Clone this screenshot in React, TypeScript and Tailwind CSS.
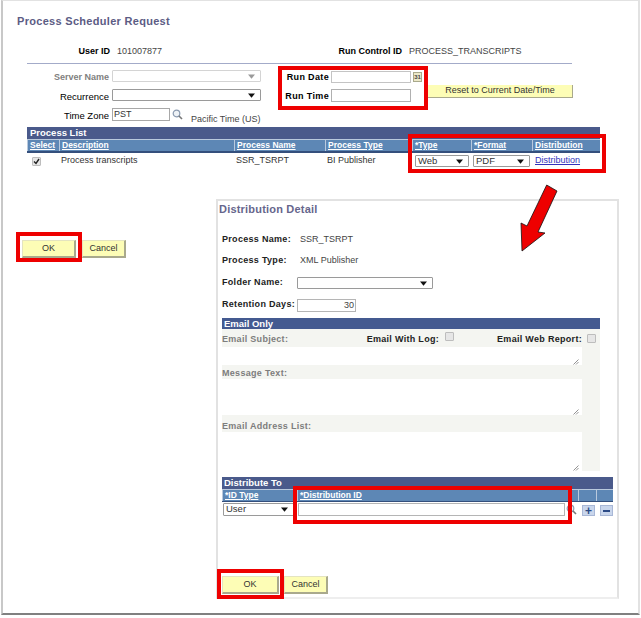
import React from "react";

const Caret = ({ faint }: { faint?: boolean }) => (
  <svg width="7" height="5" viewBox="0 0 7 5" className="shrink-0">
    <path d="M0 0.5h7L3.5 4.8z" fill={faint ? "#9a9a9a" : "#111"} />
  </svg>
);

const Select = ({ w, value, faint, h = "h-[12px]" }: { w: string; value?: string; faint?: boolean; h?: string }) => (
  <div className={`${w} ${h} flex items-center justify-between border rounded-[1px] pl-[2px] pr-[5px] text-[9.5px] bg-white ${faint ? "border-[#d4d4d4]" : "border-[#9a9a9a]"}`}>
    <span>{value}</span>
    <Caret faint={faint} />
  </div>
);

const Lookup = ({ size = 11 }: { size?: number }) => (
  <svg width={size} height={size} viewBox="0 0 11 11" fill="none" className="shrink-0">
    <circle cx="4.5" cy="4.5" r="3.3" stroke="#8a9ab0" strokeWidth="1.2" fill="#eef2f6" />
    <path d="M7 7l3 3" stroke="#777" strokeWidth="1.6" />
  </svg>
);

const Btn = ({ children, w }: { children: React.ReactNode; w: string }) => (
  <div className={`${w} h-[18px] flex items-center justify-center bg-[#fdfdb6] border-t border-l border-[#e4e4c0] border-r-2 border-b-2 border-r-[#a9a98c] border-b-[#a9a98c] text-[9px] text-[#333]`}>
    {children}
  </div>
);

const Red = ({ className }: { className: string }) => (
  <div className={`absolute border-[4px] border-[#ee0000] ${className}`} />
);

const Resize = () => (
  <svg width="6" height="6" viewBox="0 0 6 6" className="mr-[3px]">
    <path d="M0.5 5.5L5.5 0.5M3 5.5L5.5 3" stroke="#777" strokeWidth="0.8" />
  </svg>
);

const Box = ({ children }: { children?: React.ReactNode }) => (
  <div className="w-[9px] h-[9px] border border-[#bdbdbd] bg-[#e6e6e6] rounded-[1px] flex items-center justify-center">{children}</div>
);

const Th = ({ w, children }: { w: string; children?: React.ReactNode }) => (
  <div className={`${w} h-full border-l border-t border-[#b9c9dd] pl-[2px] flex items-center font-bold underline text-white text-[8.5px] overflow-hidden whitespace-nowrap`}>
    {children}
  </div>
);

export default function App() {
  return (
    <div className="relative w-[641px] h-[618px] bg-white text-[9px] text-[#333]" style={{ fontFamily: '"Liberation Sans", Arial, sans-serif' }}>
      <div className="relative ml-[1px] w-[639px] h-[615px] bg-white border-l-2 border-l-[#c8c8c8] border-t border-t-[#e2e2e2] border-r-2 border-r-[#e2e2e2] border-b-2 border-b-[#808080] pl-[14px] pt-[13px]">
        <div className="h-[14px] leading-[14px] font-bold text-[11px] tracking-[0.3px] text-[#5c5c84]">Process Scheduler Request</div>

        <div className="mt-[17px] ml-[10px] w-[545px] h-[19px] border-b border-[#a3abc9] flex items-start leading-[12px]">
          <div className="w-[83px] text-right font-bold text-black">User ID</div>
          <div className="ml-[7px] w-[219px] text-[#444]">101007877</div>
          <div className="w-[66px] text-right font-bold text-black whitespace-nowrap">Run Control ID</div>
          <div className="ml-[7px] text-[#444]">PROCESS_TRANSCRIPTS</div>
        </div>

        <div className="ml-[10px] flex h-[63px]">
          <div className="w-[234px] pt-[6px] flex flex-col gap-[7px]">
            <div className="flex items-start h-[12px]">
              <div className="w-[83px] pt-[1px] text-right font-bold text-[#808080] pr-[1px]">Server Name</div>
              <div className="ml-[2px]"><Select w="w-[149px]" faint /></div>
            </div>
            <div className="flex items-start h-[12px]">
              <div className="w-[83px] pt-[1px] text-right text-black pr-[1px] text-[9.5px]">Recurrence</div>
              <div className="ml-[2px]"><Select w="w-[149px]" /></div>
            </div>
            <div className="flex items-start h-[12px]">
              <div className="w-[83px] pt-[1px] text-right text-black pr-[1px] text-[9.5px]">Time Zone</div>
              <div className="ml-[2px] w-[58px] h-[13px] border border-[#a8a8a8] pl-[1px] leading-[11px] text-[#333]">PST</div>
              <div className="ml-[2px] mt-[1px]"><Lookup /></div>
              <div className="ml-[8px] mt-[5px] whitespace-nowrap text-[#444]">Pacific Time (US)</div>
            </div>
          </div>
          <div className="ml-[16px] w-[53px] pt-[7px] flex flex-col gap-[7px] items-end font-bold tracking-[0.35px] text-black">
            <div className="h-[12px] leading-[12px] pr-[1px]">Run Date</div>
            <div className="h-[12px] leading-[12px] pr-[1px]">Run Time</div>
          </div>
          <div className="ml-[1px] pt-[7px] flex flex-col gap-[6px]">
            <div className="flex items-center gap-[2px] h-[12px]">
              <div className="w-[80px] h-[12px] border border-[#c4c4c4]" />
              <div className="w-[9px] h-[10px] border border-[#a9a98c] bg-[#ece8c8] flex items-center justify-center text-[6px] font-bold leading-none text-[#444]">31</div>
            </div>
            <div className="w-[80px] h-[13px] border border-[#b0b0b0]" />
          </div>
          <div className="ml-[6px] mt-[21px] w-[145px] h-[13px]">
            <div className="h-[13px] leading-[11px] text-center bg-[#fdfdb6] border-r border-b border-[#a9a98c] text-[#333] whitespace-nowrap">Reset to Current Date/Time</div>
          </div>
        </div>

        <div className="ml-[10px] w-[573px]">
          <div className="h-[12px] leading-[12px] bg-[#4a5a8b] pl-[3px] font-bold text-[9.5px] text-white">Process List</div>
          <div className="h-[14px] bg-[#5d87b5] border-b-2 border-[#344f7c] flex">
            <Th w="w-[32px]">Select</Th>
            <Th w="w-[175px]">Description</Th>
            <Th w="w-[91px]">Process Name</Th>
            <Th w="w-[87px]">Process Type</Th>
            <Th w="w-[59px]">*Type</Th>
            <Th w="w-[61px]">*Format</Th>
            <Th w="w-[68px]">Distribution</Th>
          </div>
          <div className="flex items-center h-[16px] text-[#333]">
            <div className="w-[32px] pl-[5px]">
              <Box>
                <svg width="7" height="7" viewBox="0 0 7 7"><path d="M1 3.5l2 2L6 1" stroke="#222" strokeWidth="1.4" fill="none" /></svg>
              </Box>
            </div>
            <div className="w-[175px] pl-[2px]">Process transcripts</div>
            <div className="w-[91px] pl-[2px]">SSR_TSRPT</div>
            <div className="w-[87px] pl-[2px]">BI Publisher</div>
            <div className="w-[59px] pl-[3px]"><Select w="w-[54px]" value="Web" /></div>
            <div className="w-[61px] pl-[2px]"><Select w="w-[57px]" value="PDF" /></div>
            <div className="w-[68px] pl-[3px] underline text-[#3333bb]">Distribution</div>
          </div>
        </div>

        <div className="mt-[30px] flex -ml-[1px]">
          <div className="w-[200px] pl-[6px] pt-[41px] flex items-start gap-[6px]">
            <Btn w="w-[54px]">OK</Btn>
            <Btn w="w-[44px]">Cancel</Btn>
          </div>
          <div className="w-[403px] h-[400px] border-2 border-[#e2e2e2] border-b-[#eeeeee] pl-[4px] pt-[1px]">
            <div className="-ml-[3px] h-[14px] leading-[14px] font-bold text-[11px] tracking-[0.2px] text-[#66668c]">Distribution Detail</div>
            <div className="tracking-[0.3px]">
              <div className="mt-[17px] flex h-[14px] items-center">
                <div className="w-[78px] font-bold text-[#222]">Process Name:</div>
                <div className="text-[#444] tracking-normal">SSR_TSRPT</div>
              </div>
              <div className="mt-[7px] flex h-[14px] items-center">
                <div className="w-[78px] font-bold text-[#222]">Process Type:</div>
                <div className="text-[#444] tracking-normal">XML Publisher</div>
              </div>
              <div className="mt-[8px] flex h-[14px] items-center">
                <div className="w-[75px] font-bold text-[#222]">Folder Name:</div>
                <Select w="w-[136px]" />
              </div>
              <div className="mt-[8px] flex h-[14px] items-center">
                <div className="w-[75px] font-bold text-[#222]">Retention Days:</div>
                <div className="w-[59px] h-[13px] border border-[#b5b5b5] text-right pr-[1px] leading-[11px] text-[#444] tracking-normal">30</div>
              </div>
            </div>

            <div className="mt-[6px] w-[378px] h-[11px] leading-[11px] bg-[#445a90] pl-[2px] font-bold text-[9.5px] text-white">Email Only</div>
            <div className="w-[378px] h-[142px] flex">
              <div className="w-[360px] flex flex-col font-bold tracking-[0.3px] text-[#7d7d7d]">
                <div className="h-[18px] bg-[#f4f5f1] flex items-center justify-between pt-[3px]">
                  <span>Email Subject:</span>
                  <div className="flex items-center">
                    <span className="text-[#222] mr-[6px]">Email With Log:</span>
                    <div className="-mt-[6px]"><Box /></div>
                    <span className="ml-[43px] text-[#222]">Email Web Report:</span>
                  </div>
                </div>
                <div className="h-[18px] flex items-end justify-end"><Resize /></div>
                <div className="h-[14px] bg-[#f4f5f1] flex items-center pt-[3px]">Message Text:</div>
                <div className="h-[36px] flex items-end justify-end"><Resize /></div>
                <div className="h-[17px] bg-[#f4f5f1] flex items-center pt-[6px]">Email Address List:</div>
                <div className="h-[39px] flex items-end justify-end"><Resize /></div>
              </div>
              <div className="w-[18px] bg-[#f4f5f1] pl-[5px] pt-[5px]"><Box /></div>
            </div>

            <div className="mt-[6px] w-[391px] h-[12px] leading-[12px] bg-[#4a5a8b] pl-[2px] font-bold text-[9.5px] text-white">Distribute To</div>
            <div className="w-[391px] h-[13px] bg-[#5d87b5] border-b border-[#344f7c] flex">
              <Th w="w-[75px]">*ID Type</Th>
              <Th w="w-[281px]">*Distribution ID</Th>
              <Th w="w-[18px]" />
              <Th w="w-[17px]" />
            </div>
            <div className="mt-[1px] ml-[1px] flex items-start">
              <Select w="w-[71px]" h="h-[13px]" value="User" />
              <div className="ml-[4px] w-[267px] h-[13px] border border-[#b5b5b5]" />
              <div className="ml-[1px] mt-[1px]"><Lookup /></div>
              <div className="ml-[5px] mt-[2px] w-[13px] h-[11px] bg-[#c9d6ec] border border-[#a8b7d6] flex items-center justify-center text-[12px] font-bold leading-none text-[#2b4a86]">+</div>
              <div className="ml-[5px] mt-[2px] w-[13px] h-[11px] bg-[#c9d6ec] border border-[#a8b7d6] flex items-center justify-center">
                <div className="w-[7px] h-[2px] bg-[#2b4a86]" />
              </div>
            </div>
            <div className="mt-[60px] flex gap-[5px]">
              <Btn w="w-[57px]">OK</Btn>
              <Btn w="w-[44px]">Cancel</Btn>
            </div>
          </div>
        </div>
      </div>

      <Red className="left-[278px] top-[66px] w-[150px] h-[44px]" />
      <Red className="left-[408px] top-[134px] w-[198px] h-[39px]" />
      <Red className="left-[16px] top-[232px] w-[66px] h-[30px]" />
      <Red className="left-[293px] top-[486px] w-[279px] h-[38px]" />
      <Red className="left-[217px] top-[569px] w-[67px] h-[30px]" />

      <svg className="absolute left-0 top-0" width="641" height="618" viewBox="0 0 641 618">
        <path d="M546.7 185L557 191L538 232L545 233L522 251L521 223L527 226Z" fill="#ee0000" stroke="#111" strokeWidth="0.8" />
      </svg>
    </div>
  );
}
